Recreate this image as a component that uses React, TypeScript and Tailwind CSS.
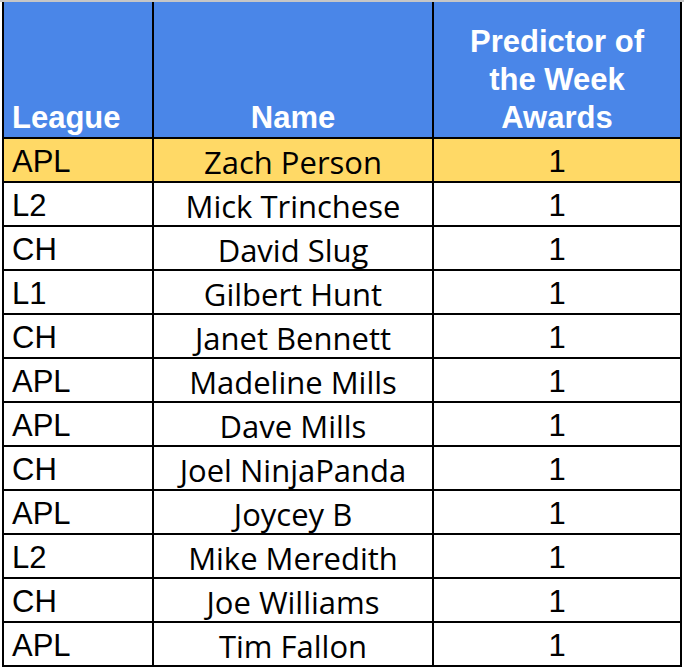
import React from "react";

const rows: [string, string][] = [
  ["APL", "Zach Person"],
  ["L2", "Mick Trinchese"],
  ["CH", "David Slug"],
  ["L1", "Gilbert Hunt"],
  ["CH", "Janet Bennett"],
  ["APL", "Madeline Mills"],
  ["APL", "Dave Mills"],
  ["CH", "Joel NinjaPanda"],
  ["APL", "Joycey B"],
  ["L2", "Mike Meredith"],
  ["CH", "Joe Williams"],
  ["APL", "Tim Fallon"],
];

export default function App() {
  const arial = { fontFamily: '"Liberation Sans", Arial, sans-serif' };
  return (
    <div className="w-[684px] h-[670px] bg-white overflow-hidden">
      <div className="h-[2px] w-[684px] bg-[#c6c6c6]" />
      <div
        className="ml-[2px] w-[680px] bg-black px-[2px] pb-[2px] grid grid-cols-[148px_278px_246px] gap-[2px]"
        style={arial}
      >
        <div className="h-[135px] bg-[#4a86e8] flex items-end px-[8px] text-white font-bold text-[31px] leading-[38px]">
          League
        </div>
        <div className="h-[135px] bg-[#4a86e8] flex items-end justify-center text-white font-bold text-[31px] leading-[38px]">
          Name
        </div>
        <div className="h-[135px] bg-[#4a86e8] flex items-end justify-center text-white font-bold text-[31px] leading-[38px] text-center">
          <span>
            Predictor of
            <br />
            the Week
            <br />
            Awards
          </span>
        </div>
        {rows.map(([league, name], i) => {
          const bg = i === 0 ? "bg-[#ffd966]" : "bg-white";
          return (
            <React.Fragment key={i}>
              <div
                className={`h-[42px] ${bg} flex items-end px-[8px] text-black text-[31px] leading-[38px]`}
              >
                {league}
              </div>
              <div
                className={`h-[42px] ${bg} flex items-end justify-center text-black text-[31px] leading-[38px]`}
                style={{ fontFamily: '"Open Sans", "Noto Sans", sans-serif' }}
              >
                {name}
              </div>
              <div
                className={`h-[42px] ${bg} flex items-end justify-center text-black text-[31px] leading-[38px]`}
              >
                1
              </div>
            </React.Fragment>
          );
        })}
      </div>
    </div>
  );
}
